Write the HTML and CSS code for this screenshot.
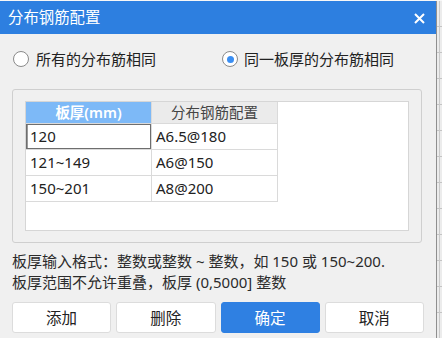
FILE: index.html
```html
<!DOCTYPE html>
<html lang="zh-CN">
<head>
<meta charset="utf-8">
<title>分布钢筋配置</title>
<link rel="stylesheet" href="styles.css">
</head>
<body>
<div class="screen">
  <div class="dialog">
    <div class="titlebar">
      <span class="title">分布钢筋配置</span>
      <svg class="close" width="11" height="11" viewBox="0 0 11 11"><path d="M1 1 L10 10 M10 1 L1 10" stroke="#fff" stroke-width="2" fill="none"/></svg>
    </div>
    <div class="content">
      <div class="radios">
        <label class="radio"><span class="circle"></span><span>所有的分布筋相同</span></label>
        <label class="radio checked"><span class="circle"></span><span>同一板厚的分布筋相同</span></label>
      </div>
      <div class="group">
        <div class="grid-box">
          <table class="grid">
            <thead>
              <tr><th class="sel">板厚(mm)</th><th>分布钢筋配置</th></tr>
            </thead>
            <tbody>
              <tr><td class="focus">120</td><td>A6.5@180</td></tr>
              <tr><td>121~149</td><td>A6@150</td></tr>
              <tr><td>150~201</td><td>A8@200</td></tr>
            </tbody>
          </table>
        </div>
      </div>
      <p class="hint">板厚输入格式：整数或整数 ~ 整数，如 150 或 150~200.<br>板厚范围不允许重叠，板厚 (0,5000] 整数</p>
      <div class="buttons">
        <button class="btn">添加</button>
        <button class="btn">删除</button>
        <button class="btn primary">确定</button>
        <button class="btn">取消</button>
      </div>
    </div>
  </div>
  <div class="backdrop"></div>
</div>
</body>
</html>
```
FILE: styles.css
```css
* { box-sizing: border-box; }
html, body { margin: 0; padding: 0; }
body {
  width: 442px;
  height: 338px;
  overflow: hidden;
  background: #f7f7f7;
  font-family: "Noto Sans", "Noto Sans CJK SC", sans-serif;
  color: #2b2b2b;
}
.screen {
  display: flex;
  height: 338px;
  padding-top: 1px;
}
.dialog {
  width: 436px;
  background: #f0f0f0;
  display: flex;
  flex-direction: column;
}
.titlebar {
  height: 33px;
  background: #2d7fe0;
  display: flex;
  align-items: center;
  justify-content: space-between;
  padding: 0 11px 0 8px;
}
.title {
  color: #fff;
  font-size: 15.4px;
  line-height: 20px;
}
.close { display: block; margin-top: 1px; }
.content {
  padding: 14px 12px 0 12px;
}
.radios {
  display: grid;
  grid-template-columns: 209px auto;
  padding-left: 1px;
  height: 22px;
  align-items: center;
}
.radio {
  display: flex;
  align-items: center;
  gap: 7px;
  font-size: 15px;
  line-height: 22px;
  color: #222;
}
.radio.checked { gap: 6px; }
.circle {
  width: 16px;
  height: 16px;
  border-radius: 50%;
  border: 1px solid #8a8a8a;
  background: #fff;
  display: flex;
  align-items: center;
  justify-content: center;
}
.checked .circle::after {
  content: "";
  width: 7px;
  height: 7px;
  border-radius: 50%;
  background: #3a8ef2;
}
.group {
  margin-top: 19px;
  width: 410px;
  height: 154px;
  border: 1px solid #cfcfcf;
  border-radius: 3px;
  padding: 11px 12px 11px 12px;
}
.grid-box {
  height: 130px;
  background: #fff;
  border: 1px solid #d6d6d6;
}
.grid {
  border-collapse: separate;
  border-spacing: 0;
  font-size: 15px;
  table-layout: fixed;
}
.grid th, .grid td {
  width: 126px;
  border-right: 1px solid #dadada;
  border-bottom: 1px solid #dadada;
  padding: 0 4px;
  white-space: nowrap;
}
.grid th {
  height: 22px;
  font-weight: normal;
  background: #ebebeb;
  color: #444;
  text-align: center;
  line-height: 21px;
  font-size: 14.5px;
}
.grid th.sel {
  background: #7db9f7;
  color: #fff;
  font-weight: 600;
}
.grid td {
  height: 26px;
  line-height: 25px;
  color: #222;
}
.grid td.focus {
  box-shadow: inset 0 0 0 1px #6e6e6e, inset 1px 0 0 1px #9a9a9a;
}
.hint {
  margin: 8px 0 0 0;
  font-size: 15px;
  line-height: 21px;
  color: #2b2b2b;
  white-space: nowrap;
}
.buttons {
  margin-top: 9px;
  display: flex;
  gap: 5px;
  width: 412px;
}
.btn {
  flex: 1;
  height: 31px;
  background: #fff;
  border: 1px solid #dcdcdc;
  border-radius: 3px;
  font-family: inherit;
  font-size: 15.5px;
  color: #222;
  padding: 0;
}
.btn.primary {
  background: #2f80e2;
  border-color: #2f80e2;
  color: #fff;
}
.backdrop {
  flex: 1;
  border-left: 1px solid #8f8f8f;
  background:
    linear-gradient(to right, transparent 2px, #c9c9c9 2px, #c9c9c9 3px, transparent 3px),
    repeating-linear-gradient(to bottom, #ececec 0, #ececec 25px, #c4c4c4 25px, #c4c4c4 26px);
}
```
